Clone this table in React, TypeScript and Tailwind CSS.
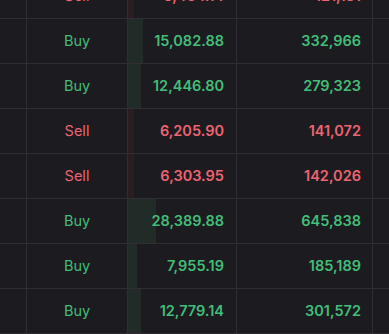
import React from "react";

interface Trade {
  side: "Buy" | "Sell";
  price: string;
  amount: string;
  depth: number;
}

const trades: Trade[] = [
  { side: "Sell", price: "5,464.14", amount: "121,181", depth: 6 },
  { side: "Buy", price: "15,082.88", amount: "332,966", depth: 15 },
  { side: "Buy", price: "12,446.80", amount: "279,323", depth: 13 },
  { side: "Sell", price: "6,205.90", amount: "141,072", depth: 6 },
  { side: "Sell", price: "6,303.95", amount: "142,026", depth: 6 },
  { side: "Buy", price: "28,389.88", amount: "645,838", depth: 28 },
  { side: "Buy", price: "7,955.19", amount: "185,189", depth: 9 },
  { side: "Buy", price: "12,779.14", amount: "301,572", depth: 13 },
];

function TradeRow({ trade }: { trade: Trade }) {
  const buy = trade.side === "Buy";
  const color = buy ? "text-[#43be78]" : "text-[#ee6470]";
  return (
    <div className="grid grid-cols-[27px_101px_109px_136px_1fr] h-[45px] border-b border-[#2f2e34]">
      <div className="border-r border-[#2f2e34]" />
      <div className={`border-r border-[#2f2e34] flex items-center justify-center text-[14.5px] ${color}`}>
        {trade.side}
      </div>
      <div className="relative border-r border-[#2f2e34] flex items-center justify-end pr-[12px]">
        <div
          className={`absolute left-0 top-0 bottom-0 ${buy ? "bg-[#212c29]" : "bg-[#2a1e23]"}`}
          style={{ width: trade.depth }}
        />
        <span className={`relative text-[14.5px] font-semibold ${color}`}>{trade.price}</span>
      </div>
      <div className={`border-r border-[#2f2e34] flex items-center justify-end pr-[11px] text-[14.5px] font-semibold ${color}`}>
        {trade.amount}
      </div>
      <div />
    </div>
  );
}

export default function App() {
  return (
    <div
      className="h-[334px] w-[389px] overflow-hidden bg-[#1c1b20]"
      style={{ fontFamily: "Inter, 'Noto Sans', sans-serif" }}
    >
      <div className="-mt-[26px]">
        {trades.map((t, i) => (
          <TradeRow key={i} trade={t} />
        ))}
      </div>
    </div>
  );
}
